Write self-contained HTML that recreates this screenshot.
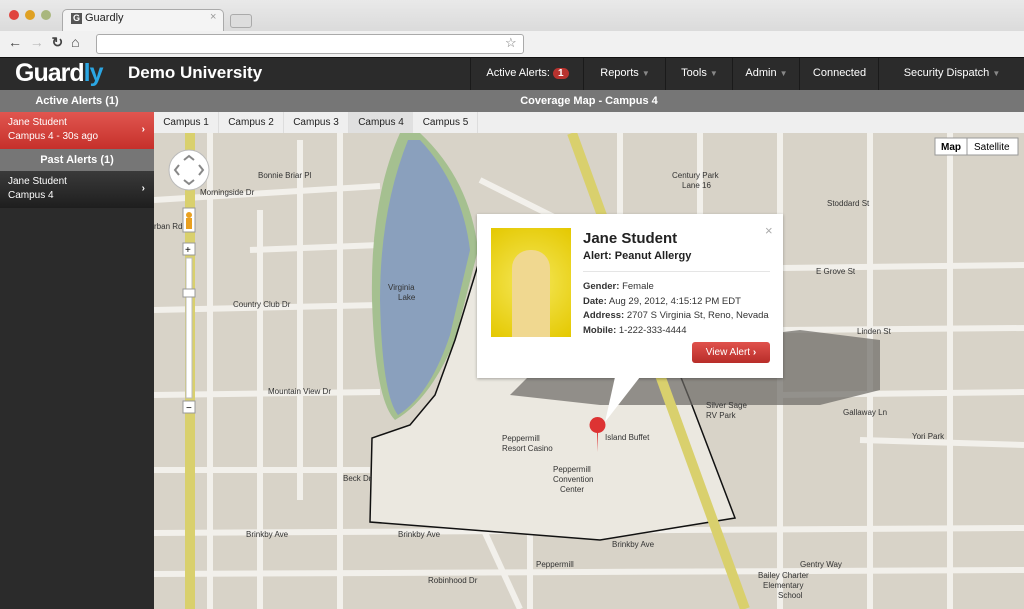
<!DOCTYPE html><html><head><style>
body{margin:0;width:1024px;height:609px;overflow:hidden;font-family:"Liberation Sans",sans-serif;position:relative;background:#e0ddd6}
.abs{position:absolute}
.nav{top:57px;left:0;width:1024px;height:32px;background:#2b2b2b;border-top:1px solid #111}
.nav .it{position:absolute;top:0;height:32px;line-height:30px;color:#fff;font-size:11px;border-left:1px solid #1a1a1a;text-align:center}
.car{color:#888;font-size:8px}
</style></head><body>
<div class="abs" style="top:0;left:0;width:1024px;height:57px;background:linear-gradient(#e9e9e9,#cfcfcf)"></div>
<div class="abs" style="top:10px;left:9px;width:10px;height:10px;border-radius:50%;background:#e0443e"></div>
<div class="abs" style="top:10px;left:25px;width:10px;height:10px;border-radius:50%;background:#dfa123"></div>
<div class="abs" style="top:10px;left:41px;width:10px;height:10px;border-radius:50%;background:#a9b77d"></div>
<div class="abs" style="top:9px;left:62px;width:160px;height:22px;background:#f4f4f4;border-radius:5px 5px 0 0;border:1px solid #aaa;border-bottom:none"></div>
<div class="abs" style="top:13px;left:71px;width:11px;height:11px;background:#555;color:#fff;font-size:9px;font-weight:bold;text-align:center;line-height:11px">G</div>
<div class="abs" style="top:12px;left:85px;font-size:11px;color:#222">Guardly</div>
<div class="abs" style="top:11px;left:210px;font-size:11px;color:#999">×</div>
<div class="abs" style="top:14px;left:230px;width:20px;height:12px;background:#ddd;border:1px solid #aaa;border-radius:3px"></div>
<div class="abs" style="top:31px;left:0;width:1024px;height:26px;background:#f1f1f1;border-bottom:1px solid #999"></div>
<div class="abs" style="top:34px;left:8px;font-size:14px;color:#444;font-weight:bold">←&nbsp; <span style="color:#bbb">→</span>&nbsp; ↻&nbsp; ⌂</div>
<div class="abs" style="top:34px;left:96px;width:426px;height:18px;background:#fff;border:1px solid #aaa;border-radius:3px"></div>
<div class="abs" style="top:35px;left:505px;font-size:13px;color:#777">☆</div>
<div class="abs nav">
<div class="abs" style="left:15px;top:0;font-size:25px;font-weight:bold;color:#fff;letter-spacing:-1px;line-height:30px">Guard<span style="color:#2ba6e3">ly</span></div>
<div class="abs" style="left:128px;top:5px;font-size:17px;font-weight:bold;color:#fff">Demo University</div>
<div class="it" style="left:470px;width:113px">Active Alerts: <span style="background:#b8332f;border-radius:8px;padding:0 5px;font-size:10px;font-weight:bold">1</span></div>
<div class="it" style="left:583px;width:82px">Reports <span class="car">▼</span></div>
<div class="it" style="left:665px;width:67px">Tools <span class="car">▼</span></div>
<div class="it" style="left:732px;width:67px">Admin <span class="car">▼</span></div>
<div class="it" style="left:799px;width:79px">Connected</div>
<div class="it" style="left:878px;width:146px">Security Dispatch <span class="car">▼</span></div>
</div>
<div class="abs" style="top:90px;left:0;width:154px;height:519px;background:#2b2b2b"></div>
<div class="abs" style="top:90px;left:0;width:154px;height:22px;background:#767676;color:#fff;font-weight:bold;font-size:11px;text-align:center;line-height:22px">Active Alerts (1)</div>
<div class="abs" style="top:112px;left:0;width:154px;height:37px;background:linear-gradient(#e05650,#c6302b);color:#fff;font-size:10px;line-height:14px"><div style="padding:4px 8px">Jane Student<br>Campus 4 - 30s ago</div><div class="abs" style="right:9px;top:11px;font-weight:bold">›</div></div>
<div class="abs" style="top:149px;left:0;width:154px;height:22px;background:#767676;color:#fff;font-weight:bold;font-size:11px;text-align:center;line-height:22px">Past Alerts (1)</div>
<div class="abs" style="top:171px;left:0;width:154px;height:37px;background:linear-gradient(#3a3a3a,#1e1e1e);color:#fff;font-size:10px;line-height:14px"><div style="padding:4px 8px">Jane Student<br>Campus 4</div><div class="abs" style="right:9px;top:11px;font-weight:bold">›</div></div>
<div class="abs" style="top:90px;left:154px;width:870px;height:22px;background:#767676;color:#fff;font-weight:bold;font-size:11px;text-align:center;line-height:22px">Coverage Map - Campus 4</div>
<div class="abs" style="top:112px;left:154px;width:870px;height:21px;background:#efefef;font-size:10px;color:#222">
<span class="abs" style="left:0;width:64px;height:21px;line-height:21px;text-align:center;border-right:1px solid #ddd">Campus 1</span>
<span class="abs" style="left:65px;width:64px;height:21px;line-height:21px;text-align:center;border-right:1px solid #ddd">Campus 2</span>
<span class="abs" style="left:130px;width:64px;height:21px;line-height:21px;text-align:center;border-right:1px solid #ddd">Campus 3</span>
<span class="abs" style="left:195px;width:64px;height:21px;line-height:21px;text-align:center;background:#e0e0e0">Campus 4</span>
<span class="abs" style="left:260px;width:63px;height:21px;line-height:21px;text-align:center;border-right:1px solid #ddd">Campus 5</span>
</div>
<svg class="abs" style="top:133px;left:154px" width="870" height="476" viewBox="154 133 870 476">
<rect x="154" y="133" width="870" height="476" fill="#d8d3c8"/>
<g stroke="#f2f0eb" stroke-width="6" fill="none">
<path d="M154 200 L380 186"/><path d="M154 310 L380 305"/><path d="M154 395 L380 392"/><path d="M154 533 L1024 528"/>
<path d="M154 574 L1024 570"/><path d="M210 133 V609"/><path d="M260 210 V609"/><path d="M300 140 V500"/>
<path d="M340 133 V609"/><path d="M250 250 L380 245"/><path d="M480 180 L620 250"/><path d="M620 133 V220"/>
<path d="M700 133 V260"/><path d="M780 133 V609"/><path d="M870 133 V609"/><path d="M950 133 V609"/>
<path d="M620 270 L1024 265"/><path d="M780 330 L1024 328"/><path d="M780 395 L1024 392"/><path d="M530 330 V609"/>
<path d="M860 440 L1024 445"/><path d="M470 500 L520 609"/><path d="M154 470 L370 470"/>
</g>
<path d="M400 133 Q370 200 372 300 Q375 400 395 420 Q430 400 455 340 L478 250 Q470 180 420 133Z" fill="#a5c090"/>
<path d="M408 140 Q380 210 380 300 Q382 395 398 415 Q430 395 450 335 L470 250 Q462 185 420 140Z" fill="#8aa0bd"/>
<path d="M478 265 L455 340 L435 395 L410 425 L372 438 L370 522 L600 540 L735 518 L690 400 L650 300 L478 300Z" fill="#ebe8e0" stroke="#111" stroke-width="1.5"/>
<path d="M510 395 L545 360 L800 330 L880 340 L880 390 L820 405 L600 405Z" fill="#6b6864" opacity=".7"/>
<path d="M190 133 V609" stroke="#d9d06d" stroke-width="10"/>
<path d="M572 133 L745 609" stroke="#d9d06d" stroke-width="10"/>
<g font-size="8" fill="#333" font-family="Liberation Sans,sans-serif">
<text x="258" y="178">Bonnie Briar Pl</text><text x="200" y="195">Morningside Dr</text><text x="233" y="307">Country Club Dr</text>
<text x="268" y="394">Mountain View Dr</text><text x="388" y="290">Virginia</text><text x="398" y="300">Lake</text>
<text x="672" y="178">Century Park</text><text x="682" y="188">Lane 16</text><text x="827" y="206">Stoddard St</text>
<text x="816" y="274">E Grove St</text><text x="857" y="334">Linden St</text><text x="843" y="415">Gallaway Ln</text>
<text x="706" y="408">Silver Sage</text><text x="706" y="418">RV Park</text><text x="912" y="439">Yori Park</text>
<text x="502" y="441">Peppermill</text><text x="502" y="451">Resort Casino</text><text x="605" y="440">Island Buffet</text>
<text x="553" y="472">Peppermill</text><text x="553" y="482">Convention</text><text x="560" y="492">Center</text>
<text x="246" y="537">Brinkby Ave</text><text x="398" y="537">Brinkby Ave</text><text x="612" y="547">Brinkby Ave</text>
<text x="536" y="567">Peppermill</text><text x="428" y="583">Robinhood Dr</text><text x="800" y="567">Gentry Way</text>
<text x="758" y="578">Bailey Charter</text><text x="763" y="588">Elementary</text><text x="778" y="598">School</text>
<text x="154" y="229">rban Rd</text><text x="343" y="481">Beck Dr</text>
</g>
<path d="M597 433 a8 8 0 1 1 1 0 L597 452 Z" fill="#d33"/>
<rect x="935" y="138" width="83" height="17" fill="#fff" stroke="#999"/>
<text x="941" y="150" font-size="10" font-weight="bold" font-family="Liberation Sans">Map</text>
<line x1="967" y1="138" x2="967" y2="155" stroke="#999"/>
<text x="974" y="150" font-size="10" font-family="Liberation Sans">Satellite</text>
<circle cx="189" cy="170" r="20" fill="#fff" stroke="#bbb"/>
<path d="M184 160 l5 -4 l5 4 M184 180 l5 4 l5 -4 M179 165 l-4 5 l4 5 M199 165 l4 5 l-4 5" stroke="#888" stroke-width="2" fill="none"/>
<rect x="183" y="208" width="12" height="24" fill="#fff" stroke="#999"/><circle cx="189" cy="215" r="3" fill="#e9a020"/><rect x="186" y="218" width="6" height="11" fill="#e9a020"/>
<rect x="183" y="243" width="12" height="12" fill="#fff" stroke="#999"/><text x="185" y="253" font-size="10">+</text>
<rect x="186" y="258" width="6" height="140" fill="#fff" stroke="#bbb"/>
<rect x="183" y="289" width="12" height="8" fill="#fff" stroke="#999"/>
<rect x="183" y="401" width="12" height="12" fill="#fff" stroke="#999"/><text x="186" y="411" font-size="10">−</text>
</svg>
<div class="abs" style="top:214px;left:477px;width:306px;height:164px;background:#fff;box-shadow:0 1px 3px rgba(0,0,0,.3)"></div>
<svg class="abs" style="top:377px;left:600px" width="40" height="50"><path d="M15 0 L40 0 L5 45 Z" fill="#fff"/></svg>
<div class="abs" style="top:228px;left:491px;width:80px;height:109px;background:radial-gradient(circle at 50% 50%,#f5e85a,#e4c800)"></div>
<div class="abs" style="top:250px;left:512px;width:38px;height:87px;background:#f0d890;border-radius:18px 18px 0 0"></div>
<div class="abs" style="top:223px;left:765px;color:#aaa;font-size:13px">×</div>
<div class="abs" style="top:230px;left:583px;font-size:15px;font-weight:bold;color:#222">Jane Student</div>
<div class="abs" style="top:250px;left:583px;font-size:11px;font-weight:bold;color:#222">Alert: Peanut Allergy</div>
<div class="abs" style="top:271px;left:583px;width:187px;border-top:1px solid #e5e5e5"></div>
<div class="abs" style="top:280px;left:583px;font-size:9.5px;line-height:14.5px;color:#333"><b>Gender:</b> Female<br><b>Date:</b> Aug 29, 2012, 4:15:12 PM EDT<br><b>Address:</b> 2707 S Virginia St, Reno, Nevada<br><b>Mobile:</b> 1-222-333-4444</div>
<div class="abs" style="top:342px;left:692px;width:78px;height:21px;border-radius:3px;background:linear-gradient(#e0524d,#b82d29);color:#fff;font-size:10px;text-align:center;line-height:21px">View Alert <b>›</b></div>
</body></html>
